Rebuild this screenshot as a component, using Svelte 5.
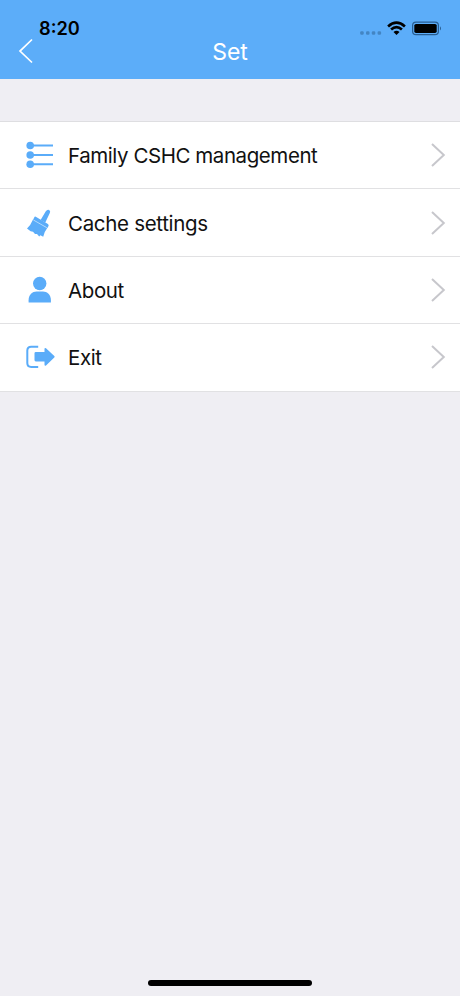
<script>
  const rows = [
    { label: 'Family CSHC management', icon: 'list', spacing: -0.43 },
    { label: 'Cache settings', icon: 'brush', spacing: -0.31 },
    { label: 'About', icon: 'person', spacing: -0.4 },
    { label: 'Exit', icon: 'exit', spacing: -0.4 }
  ];
</script>

<div class="screen">
  <header>
    <div class="status">
      <span class="time">8:20</span>
      <svg class="indicators" width="84" height="20" viewBox="0 0 84 20">
        <g fill="#4385c3">
          <rect x="2.2" y="11.3" width="3.5" height="3.5" rx="1.2" />
          <rect x="8" y="11.3" width="3.5" height="3.5" rx="1.2" />
          <rect x="13.8" y="11.3" width="3.5" height="3.5" rx="1.2" />
          <rect x="19.6" y="11.3" width="3.5" height="3.5" rx="1.2" />
        </g>
        <g fill="none" stroke="#000" stroke-width="2.7">
          <path d="M30.1 6.4Q38.5 -1.1 46.9 6.4" />
          <path d="M33.1 9.6Q38.5 4.8 43.9 9.6" />
        </g>
        <path d="M35.5 12Q38.5 9.6 41.5 12L38.5 15Z" fill="#000" />
        <rect x="54.6" y="2.2" width="25.8" height="12.4" rx="3.4" fill="none" stroke="#285d91" stroke-width="1.2" />
        <rect x="56.3" y="3.9" width="22.4" height="9" rx="1.7" fill="#000" />
        <path d="M82 6.2Q84 8.4 82 10.6Z" fill="#285d91" />
      </svg>
    </div>
    <div class="nav">
      <svg class="back" width="16" height="26" viewBox="0 0 16 26">
        <path d="M14 1.5L2 13.1L14 24.5" fill="none" stroke="#fff" stroke-width="1.7" />
      </svg>
      <h1>Set</h1>
    </div>
  </header>

  <main>
    {#each rows as row}
      <div class="row">
        <svg class="icon" width="32" height="32" viewBox="0 0 32 32">
          {#if row.icon === 'list'}
            <path d="M6 6.5H29M6 16H29M6 25.3H29" stroke="#5aacf9" stroke-width="2" />
            <g fill="#5aacf9">
              <circle cx="6.2" cy="6.5" r="3.8" />
              <circle cx="6.2" cy="16" r="3.8" />
              <circle cx="6.2" cy="25.3" r="3.8" />
            </g>
          {:else if row.icon === 'brush'}
            <g fill="#5aacf9">
              <path d="M16.6 13L21.8 4.2Q23.4 1.9 25.2 3Q26.9 4.2 25.7 6.3L21.3 15.4Z" />
              <path d="M11.8 9.8L23.9 17Q25.1 17.8 24.5 19L23.4 21.1L9 12.9L10.2 10.5Q10.8 9.2 11.8 9.8Z" />
              <path d="M9 12.6L23.4 20.8Q20.4 24.6 19.2 29.8L16.4 28.3L15.2 29.5L13 26.9L11 26.9L9 24.7L6.6 24.2L3 21.4Q6.7 18.4 9 12.6Z" />
            </g>
            <path d="M9.4 13L22.8 20.7" stroke="#c5e2fd" stroke-width=".8" />
          {:else if row.icon === 'person'}
            <g fill="#5aacf9">
              <circle cx="15.7" cy="9.5" r="6.7" />
              <path d="M4.6 28.5V26.3C4.6 20.8 8.5 17.5 12.5 17.5H19C23.1 17.5 26.9 20.8 26.9 26.3V28.5Z" />
            </g>
          {:else}
            <path d="M14.2 5.7H7.2Q3.3 5.7 3.3 9.6V22.1Q3.3 26 7.2 26H14.2" fill="none" stroke="#5aacf9" stroke-width="2" />
            <path d="M11.8 11H20.5V7.7Q20.7 6.4 22 7.2L30.3 15Q31.1 15.8 30.3 16.6L22 24.4Q20.7 25.1 20.5 23.8V20.4H11.8Q10.5 20.4 10.5 19.1V12.3Q10.5 11 11.8 11Z" fill="#5aacf9" />
          {/if}
        </svg>
        <span class="label" style="letter-spacing: {row.spacing}px">{row.label}</span>
        <svg class="chevron" width="16" height="26" viewBox="0 0 16 26">
          <path d="M2 2L13.8 13L2 24" fill="none" stroke="#c7c7cc" stroke-width="2" />
        </svg>
      </div>
    {/each}
  </main>
  <footer><div class="home"></div></footer>
</div>

<style>
  :global(body) {
    margin: 0;
    background: #efeef3;
  }
  .screen {
    display: flex;
    flex-direction: column;
    width: 460px;
    height: 996px;
    background: #efeef3;
    font-family: Inter, "Liberation Sans", sans-serif;
    color: #111;
  }
  header {
    box-sizing: border-box;
    height: 78.6px;
    padding-top: 18px;
    background: #5cadf9;
  }
  .status {
    display: flex;
    justify-content: space-between;
    height: 20px;
    padding: 0 18px 0 39px;
  }
  .time {
    color: #000;
    font-size: 18.2px;
    font-weight: 600;
    line-height: 21px;
  }
  .indicators {
    margin-top: 1.5px;
  }
  .nav {
    display: grid;
    grid-template-columns: 1fr auto 1fr;
    height: 28px;
  }
  .back {
    margin-left: 18px;
  }
  h1 {
    margin: 0;
    color: #fff;
    font-size: 23px;
    font-weight: 400;
    line-height: 28px;
  }
  main {
    margin-top: 42.4px;
    border-top: 1px solid #dedee1;
    background: #fff;
  }
  .row {
    box-sizing: border-box;
    display: flex;
    align-items: center;
    height: 67.4px;
    padding: 0 14px 0 24px;
    border-bottom: 1px solid #e1e1e3;
  }
  .label {
    flex: 1;
    margin-left: 12px;
    font-size: 20.5px;
    line-height: 28px;
    padding-top: 2px;
    white-space: nowrap;
  }
  footer {
    display: flex;
    justify-content: center;
    margin-top: auto;
    padding-bottom: 10px;
  }
  .home {
    width: 164px;
    height: 6px;
    border-radius: 3px;
    background: #000;
  }
</style>
